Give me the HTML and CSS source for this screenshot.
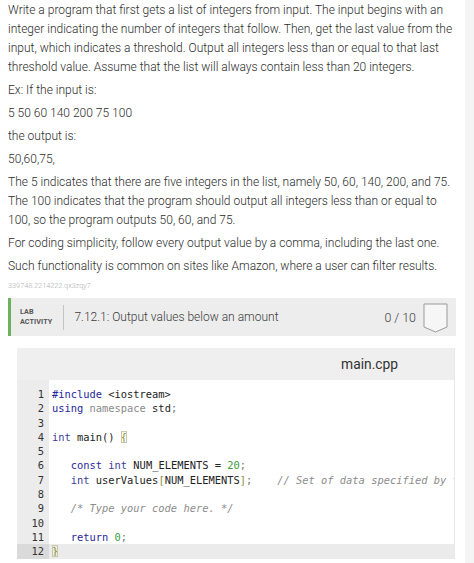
FILE: index.html
```html
<!DOCTYPE html>
<html>
<head>
<meta charset="utf-8">
<link rel="stylesheet" href="styles.css">
</head>
<body>
<div class="page">
  <main class="content">
    <p>Write a program that first gets a list of integers from input. The input begins with an integer indicating the number of integers that follow. Then, get the last value from the input, which indicates a threshold. Output all integers less than or equal to that last threshold value. Assume that the list will always contain less than 20 integers.</p>
    <p>Ex: If the input is:</p>
    <p>5 50 60 140 200 75 100</p>
    <p>the output is:</p>
    <p>50,60,75,</p>
    <p>The 5 indicates that there are five integers in the list, namely 50, 60, 140, 200, and 75. The 100 indicates that the program should output all integers less than or equal to 100, so the program outputs 50, 60, and 75.</p>
    <p>For coding simplicity, follow every output value by a comma, including the last one.</p>
    <p>Such functionality is common on sites like Amazon, where a user can filter results.</p>
    <div class="ref-id">339748.2214222.qx3zqy7</div>

    <section class="lab">
      <header class="lab-head">
        <div class="lab-label">LAB<br>ACTIVITY</div>
        <div class="lab-title">7.12.1: Output values below an amount</div>
        <div class="lab-score">0 / 10</div>
        <svg class="lab-badge" width="25" height="30" viewBox="0 0 25 30">
          <path d="M1 1 H24 V24 L12.5 29 L1 24 Z" fill="#f6f6f6" stroke="#9a9a9a" stroke-width="1"/>
        </svg>
      </header>
      <div class="lab-body">
        <div class="editor">
          <div class="editor-head"><span class="filename">main.cpp</span></div>
          <div class="code">
            <div class="row"><span class="ln">1</span><span class="src"><span class="kw">#include</span> &lt;iostream&gt;</span></div>
            <div class="row"><span class="ln">2</span><span class="src"><span class="kw">using</span> <span class="dim">namespace</span> std<span class="pn">;</span></span></div>
            <div class="row"><span class="ln">3</span><span class="src"></span></div>
            <div class="row"><span class="ln">4</span><span class="src"><span class="ty">int</span> main() <span class="br">{</span></span></div>
            <div class="row"><span class="ln">5</span><span class="src"></span></div>
            <div class="row"><span class="ln">6</span><span class="src">   <span class="kw">const</span> <span class="ty">int</span> NUM_ELEMENTS = <span class="num">20</span><span class="pn">;</span></span></div>
            <div class="row"><span class="ln">7</span><span class="src">   <span class="ty">int</span> userValues<span class="bk">[</span>NUM_ELEMENTS<span class="bk">]</span><span class="pn">;</span>    <span class="cm">// Set of data specified by the user</span></span></div>
            <div class="row"><span class="ln">8</span><span class="src"></span></div>
            <div class="row"><span class="ln">9</span><span class="src">   <span class="cm">/* Type your code here. */</span></span></div>
            <div class="row"><span class="ln">10</span><span class="src"></span></div>
            <div class="row"><span class="ln">11</span><span class="src">   <span class="kw">return</span> <span class="num">0</span><span class="pn">;</span></span></div>
            <div class="row active"><span class="ln">12</span><span class="src"><span class="br">}</span></span></div>
          </div>
        </div>
      </div>
    </section>
  </main>
  <aside class="rail"></aside>
</div>
</body>
</html>
```

FILE: styles.css
```css
* { box-sizing: border-box; }

html, body {
  margin: 0;
  padding: 0;
  background: #ffffff;
}

body {
  font-family: Roboto, "Noto Sans", Arial, sans-serif;
  color: #2c2c2c;
  overflow: hidden;
}

.page {
  display: flex;
  width: 474px;
  height: 563px;
}

.content {
  flex: 0 0 465px;
  min-width: 0;
  overflow: hidden;
  padding: 1px 9px 0 8px;
  background: #ffffff;
}

.rail {
  flex: 1;
  background: #f4f4f4;
}

.content p {
  margin: 0 0 4px;
  font-size: 12px;
  line-height: 19px;
  font-weight: 300;
}

.ref-id {
  font-size: 7.3px;
  font-weight: 300;
  color: #b0b0b0;
  line-height: 12px;
  margin: 4px 0 6px;
}

.lab-head {
  display: flex;
  align-items: center;
  height: 38px;
  background: #ededed;
  border-left: 3px solid #6db060;
  padding: 0 8px 0 9px;
}

.lab-label {
  font-size: 7.2px;
  font-weight: 700;
  line-height: 10px;
  color: #555;
  letter-spacing: 0.1px;
  padding-right: 11px;
  border-right: 1px solid #c4c4c4;
  height: 25px;
  display: flex;
  align-items: center;
}

.lab-title {
  flex: 1;
  font-size: 12px;
  font-weight: 300;
  color: #3c3c3c;
  padding-left: 10px;
}

.lab-score {
  font-size: 12.4px;
  font-weight: 300;
  color: #3c3c3c;
  margin-right: 7px;
}

.lab-badge {
  display: block;
  margin-top: 2px;
}

.lab-body {
  padding: 12px 1px 0 9px;
}

.editor {
  border-right: 1px solid #e8e8e8;
  overflow: hidden;
}

.editor-head {
  height: 32px;
  background: #efefef;
  display: flex;
  align-items: center;
  justify-content: flex-end;
  padding-right: 56px;
}

.filename {
  font-size: 13.8px;
  color: #333;
}

.code {
  padding-top: 7px;
  background: linear-gradient(to right, #ececec 32px, #ffffff 32px);
  font-family: "DejaVu Sans Mono", "Liberation Mono", monospace;
  font-size: 10.4px;
  line-height: 14.3px;
  color: #222;
}

.row {
  display: flex;
  white-space: pre;
}

.ln {
  width: 32px;
  flex: none;
  text-align: right;
  padding-right: 5px;
  color: #333;
}

.src {
  padding-left: 3px;
  flex: 1;
}

.row.active .ln { background: #dadada; }
.row.active .src { background: #ebebeb; }

.kw { color: #27279a; }
.ty { color: #3c3c9c; }
.dim { color: #8a8a8a; }
.num { color: #3f9a3f; }
.pn { color: #777; }
.cm { color: #8c8c8c; font-style: italic; }
.bk { color: #8f8f2e; }
.br {
  color: #8f8f2e;
  outline: 1px solid #c8c8a8;
  outline-offset: -1px;
}
```
